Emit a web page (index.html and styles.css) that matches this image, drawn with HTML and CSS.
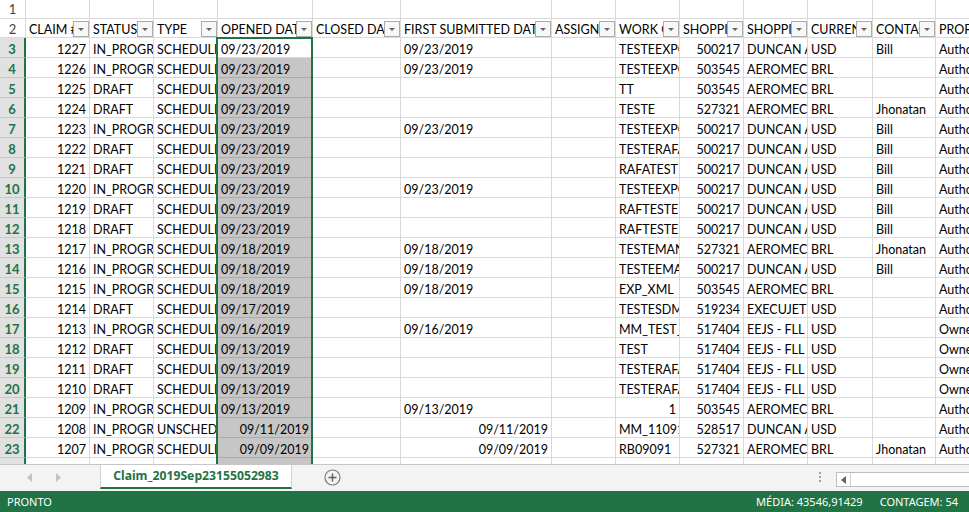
FILE: index.html
```html
<!DOCTYPE html>
<html>
<head>
<meta charset="utf-8">
<link rel="stylesheet" href="styles.css">
</head>
<body>
<div class="app">
  <div class="sheet">
    <div class="grid">
      <div class="row r1"><div class="rh">1</div><div></div><div></div><div></div><div></div><div></div><div></div><div></div><div></div><div></div><div></div><div></div><div></div><div></div></div>
      <div class="row r2 hdr"><div class="rh">2</div><div>CLAIM #<b class="fb"></b></div><div>STATUS<b class="fb"></b></div><div>TYPE<b class="fb"></b></div><div>OPENED DATE<b class="fb"></b></div><div>CLOSED DATE<b class="fb"></b></div><div>FIRST SUBMITTED DATE<b class="fb"></b></div><div>ASSIGNEE<b class="fb"></b></div><div>WORK ORDER<b class="fb"></b></div><div>SHOPPING CART<b class="fb"></b></div><div>SHOPPING NAME<b class="fb"></b></div><div>CURRENCY<b class="fb"></b></div><div>CONTACT<b class="fb"></b></div><div>PROFILE</div></div>
      <div class="row"><div class="rh on">3</div><div class="n">1227</div><div>IN_PROGRESS</div><div>SCHEDULED</div><div class="act">09/23/2019</div><div></div><div>09/23/2019</div><div></div><div>TESTEEXPORT</div><div class="n">500217</div><div>DUNCAN AVIATION</div><div>USD</div><div>Bill</div><div>Authorized</div></div>
      <div class="row"><div class="rh on">4</div><div class="n">1226</div><div>IN_PROGRESS</div><div>SCHEDULED</div><div class="s">09/23/2019</div><div></div><div>09/23/2019</div><div></div><div>TESTEEXPORT2</div><div class="n">503545</div><div>AEROMECANICA</div><div>BRL</div><div></div><div>Authorized</div></div>
      <div class="row"><div class="rh on">5</div><div class="n">1225</div><div>DRAFT</div><div>SCHEDULED</div><div class="s">09/23/2019</div><div></div><div></div><div></div><div>TT</div><div class="n">503545</div><div>AEROMECANICA</div><div>BRL</div><div></div><div>Authorized</div></div>
      <div class="row"><div class="rh on">6</div><div class="n">1224</div><div>DRAFT</div><div>SCHEDULED</div><div class="s">09/23/2019</div><div></div><div></div><div></div><div>TESTE</div><div class="n">527321</div><div>AEROMECANICA</div><div>BRL</div><div>Jhonatan</div><div>Authorized</div></div>
      <div class="row"><div class="rh on">7</div><div class="n">1223</div><div>IN_PROGRESS</div><div>SCHEDULED</div><div class="s">09/23/2019</div><div></div><div>09/23/2019</div><div></div><div>TESTEEXPORT3</div><div class="n">500217</div><div>DUNCAN AVIATION</div><div>USD</div><div>Bill</div><div>Authorized</div></div>
      <div class="row"><div class="rh on">8</div><div class="n">1222</div><div>DRAFT</div><div>SCHEDULED</div><div class="s">09/23/2019</div><div></div><div></div><div></div><div>TESTERAFAEL</div><div class="n">500217</div><div>DUNCAN AVIATION</div><div>USD</div><div>Bill</div><div>Authorized</div></div>
      <div class="row"><div class="rh on">9</div><div class="n">1221</div><div>DRAFT</div><div>SCHEDULED</div><div class="s">09/23/2019</div><div></div><div></div><div></div><div>RAFATEST</div><div class="n">500217</div><div>DUNCAN AVIATION</div><div>USD</div><div>Bill</div><div>Authorized</div></div>
      <div class="row"><div class="rh on">10</div><div class="n">1220</div><div>IN_PROGRESS</div><div>SCHEDULED</div><div class="s">09/23/2019</div><div></div><div>09/23/2019</div><div></div><div>TESTEEXPORT4</div><div class="n">500217</div><div>DUNCAN AVIATION</div><div>USD</div><div>Bill</div><div>Authorized</div></div>
      <div class="row"><div class="rh on">11</div><div class="n">1219</div><div>DRAFT</div><div>SCHEDULED</div><div class="s">09/23/2019</div><div></div><div></div><div></div><div>RAFTESTE</div><div class="n">500217</div><div>DUNCAN AVIATION</div><div>USD</div><div>Bill</div><div>Authorized</div></div>
      <div class="row"><div class="rh on">12</div><div class="n">1218</div><div>DRAFT</div><div>SCHEDULED</div><div class="s">09/23/2019</div><div></div><div></div><div></div><div>RAFTESTE</div><div class="n">500217</div><div>DUNCAN AVIATION</div><div>USD</div><div>Bill</div><div>Authorized</div></div>
      <div class="row"><div class="rh on">13</div><div class="n">1217</div><div>IN_PROGRESS</div><div>SCHEDULED</div><div class="s">09/18/2019</div><div></div><div>09/18/2019</div><div></div><div>TESTEMANUAL</div><div class="n">527321</div><div>AEROMECANICA</div><div>BRL</div><div>Jhonatan</div><div>Authorized</div></div>
      <div class="row"><div class="rh on">14</div><div class="n">1216</div><div>IN_PROGRESS</div><div>SCHEDULED</div><div class="s">09/18/2019</div><div></div><div>09/18/2019</div><div></div><div>TESTEEMAIL</div><div class="n">500217</div><div>DUNCAN AVIATION</div><div>USD</div><div>Bill</div><div>Authorized</div></div>
      <div class="row"><div class="rh on">15</div><div class="n">1215</div><div>IN_PROGRESS</div><div>SCHEDULED</div><div class="s">09/18/2019</div><div></div><div>09/18/2019</div><div></div><div>EXP_XML</div><div class="n">503545</div><div>AEROMECANICA</div><div>BRL</div><div></div><div>Authorized</div></div>
      <div class="row"><div class="rh on">16</div><div class="n">1214</div><div>DRAFT</div><div>SCHEDULED</div><div class="s">09/17/2019</div><div></div><div></div><div></div><div>TESTESDM</div><div class="n">519234</div><div>EXECUJET</div><div>USD</div><div></div><div>Authorized</div></div>
      <div class="row"><div class="rh on">17</div><div class="n">1213</div><div>IN_PROGRESS</div><div>SCHEDULED</div><div class="s">09/16/2019</div><div></div><div>09/16/2019</div><div></div><div>MM_TEST_1</div><div class="n">517404</div><div>EEJS - FLL</div><div>USD</div><div></div><div>Owner</div></div>
      <div class="row"><div class="rh on">18</div><div class="n">1212</div><div>DRAFT</div><div>SCHEDULED</div><div class="s">09/13/2019</div><div></div><div></div><div></div><div>TEST</div><div class="n">517404</div><div>EEJS - FLL</div><div>USD</div><div></div><div>Owner</div></div>
      <div class="row"><div class="rh on">19</div><div class="n">1211</div><div>DRAFT</div><div>SCHEDULED</div><div class="s">09/13/2019</div><div></div><div></div><div></div><div>TESTERAFA1</div><div class="n">517404</div><div>EEJS - FLL</div><div>USD</div><div></div><div>Owner</div></div>
      <div class="row"><div class="rh on">20</div><div class="n">1210</div><div>DRAFT</div><div>SCHEDULED</div><div class="s">09/13/2019</div><div></div><div></div><div></div><div>TESTERAFA2</div><div class="n">517404</div><div>EEJS - FLL</div><div>USD</div><div></div><div>Owner</div></div>
      <div class="row"><div class="rh on">21</div><div class="n">1209</div><div>IN_PROGRESS</div><div>SCHEDULED</div><div class="s">09/13/2019</div><div></div><div>09/13/2019</div><div></div><div class="n">1</div><div class="n">503545</div><div>AEROMECANICA</div><div>BRL</div><div></div><div>Authorized</div></div>
      <div class="row"><div class="rh on">22</div><div class="n">1208</div><div>IN_PROGRESS</div><div>UNSCHEDULED</div><div class="s n">09/11/2019</div><div></div><div class="n">09/11/2019</div><div></div><div>MM_110919</div><div class="n">528517</div><div>DUNCAN AVIATION</div><div>USD</div><div></div><div>Authorized</div></div>
      <div class="row"><div class="rh on">23</div><div class="n">1207</div><div>IN_PROGRESS</div><div>SCHEDULED</div><div class="s n">09/09/2019</div><div></div><div class="n">09/09/2019</div><div></div><div>RB09091</div><div class="n">527321</div><div>AEROMECANICA</div><div>BRL</div><div>Jhonatan</div><div>Authorized</div></div>
      <div class="row"><div class="rh on">24</div><div class="n">1206</div><div>IN_PROGRESS</div><div>SCHEDULED</div><div class="s n">09/06/2019</div><div></div><div class="n">09/06/2019</div><div></div><div>TESTE01</div><div class="n">500217</div><div>DUNCAN AVIATION</div><div>USD</div><div>Bill</div><div>Authorized</div></div>
    </div>
    <div class="selection"></div>
  </div>

  <div class="tabbar">
    <div class="nav">
      <svg width="6" height="9" viewBox="0 0 6 9"><polygon points="5,0 5,9 0,4.5" fill="#c2c2c2"/></svg>
      <svg width="6" height="9" viewBox="0 0 6 9"><polygon points="1,0 1,9 6,4.5" fill="#c2c2c2"/></svg>
    </div>
    <div class="tab">Claim_2019Sep23155052983</div>
    <div class="add">
      <svg width="17" height="17" viewBox="0 0 17 17"><circle cx="8.5" cy="8.5" r="7.5" fill="none" stroke="#7a7a7a" stroke-width="1.2"/><path d="M8.5 4.5v8M4.5 8.5h8" stroke="#5e5e5e" stroke-width="1.4"/></svg>
    </div>
    <div class="spacer"></div>
    <div class="dots"><i></i><i></i><i></i></div>
    <div class="hscroll">
      <div class="hbtn"><svg width="5" height="8" viewBox="0 0 5 8"><polygon points="5,0 5,8 0,4" fill="#606060"/></svg></div>
    </div>
  </div>

  <div class="status">
    <span class="ready">PRONTO</span>
    <span class="spacer"></span>
    <span class="stat">MÉDIA: 43546,91429</span>
    <span class="stat">CONTAGEM: 54</span>
  </div>
</div>
</body>
</html>
```

FILE: styles.css
```css
* { box-sizing: border-box; }
html, body { margin: 0; padding: 0; overflow: hidden; background: #fff; }
body {
  font-family: Lato, "Liberation Sans", sans-serif;
  font-size: 12.5px;
  color: #000;
}
.app { display: flex; flex-direction: column; width: 969px; height: 512px; }

/* ---------- sheet ---------- */
.sheet { position: relative; flex: none; height: 464px; overflow: hidden; }
.grid { width: 1100px; }
.row { display: flex; height: 20px; }
.row.r1, .row.r2 { height: 19px; }
.row > div {
  flex: none;
  height: 100%;
  border-right: 1px solid #d9d9d9;
  border-bottom: 1px solid #d9d9d9;
  overflow: hidden;
  white-space: nowrap;
  padding: 2px 3px 0;
  line-height: 19px;
}
.row.r1 > div { padding-top: 0; line-height: 18px; }
.row.r2 > div { padding-top: 1px; line-height: 19px; }
.row > div:nth-child(1)  { width: 26px; }
.row > div:nth-child(2)  { width: 64px; }
.row > div:nth-child(3)  { width: 64px; }
.row > div:nth-child(4)  { width: 64px; }
.row > div:nth-child(5)  { width: 95px; }
.row > div:nth-child(6)  { width: 88px; }
.row > div:nth-child(7)  { width: 151px; }
.row > div:nth-child(8)  { width: 64px; }
.row > div:nth-child(9)  { width: 64px; }
.row > div:nth-child(10) { width: 64px; }
.row > div:nth-child(11) { width: 64px; }
.row > div:nth-child(12) { width: 65px; }
.row > div:nth-child(13) { width: 63px; }
.row > div:nth-child(14) { width: 130px; }

.row > .n { text-align: right; }

.row > .rh {
  padding-left: 0;
  padding-right: 0;
  text-align: center;
  color: #444;
  background: #fff;
  font-size: 13px;
}
.row > .rh.on {
  color: #217346;
  font-weight: 700;
  background: #e1e1e1;
  border-right: 2px solid #217346;
  border-bottom-color: #c8c8c8;
}

.row > .s {
  background: #c6c6c6;
  border-bottom-color: #ababab;
}

.hdr > div { position: relative; }
.fb {
  position: absolute;
  right: 0;
  top: 2px;
  width: 16px;
  height: 16px;
  border: 1px solid #acacac;
  background: #f7f7f7;
}
.fb::after {
  content: "";
  position: absolute;
  left: 4px;
  top: 6px;
  border-left: 3px solid transparent;
  border-right: 3px solid transparent;
  border-top: 3px solid #666;
}

.selection {
  position: absolute;
  left: 216px;
  top: 37px;
  width: 97px;
  height: 460px;
  border: 2px solid #217346;
  pointer-events: none;
}

/* ---------- sheet tabs ---------- */
.tabbar {
  flex: none;
  height: 27px;
  display: flex;
  align-items: flex-start;
  background: #f3f3f3;
  border-top: 1px solid #c6c6c6;
}
.nav {
  width: 100px;
  height: 24px;
  display: flex;
  align-items: center;
  padding-left: 27px;
  gap: 22px;
}
.tab {
  width: 192px;
  height: 24px;
  background: #fff;
  border-left: 1px solid #d0d0d0;
  border-right: 1px solid #d0d0d0;
  border-bottom: 2px solid #217346;
  color: #217346;
  font-family: "Noto Sans", sans-serif;
  font-weight: 700;
  font-size: 12.2px;
  line-height: 22px;
  text-align: center;
}
.add { margin-left: 32px; height: 24px; display: flex; align-items: center; }
.add svg { display: block; }
.spacer { flex: 1; }
.dots {
  height: 24px;
  display: flex;
  flex-direction: column;
  justify-content: center;
  gap: 2px;
  margin-right: 15px;
}
.dots i { display: block; width: 2px; height: 2px; background: #a0a0a0; }
.hscroll {
  margin-top: 7px;
  width: 133px;
  height: 15px;
  background: #fff;
  border: 1px solid #bdbdbd;
  border-right: none;
  display: flex;
}
.hbtn {
  width: 14px;
  height: 100%;
  border-right: 1px solid #cfcfcf;
  display: flex;
  align-items: center;
  justify-content: center;
}

/* ---------- status bar ---------- */
.status {
  flex: none;
  height: 21px;
  background: #217346;
  color: #fff;
  display: flex;
  align-items: center;
  padding: 0 11px 0 7px;
  font-family: "Noto Sans", sans-serif;
  font-size: 11px;
}
.stat { margin-left: 17px; }
```
